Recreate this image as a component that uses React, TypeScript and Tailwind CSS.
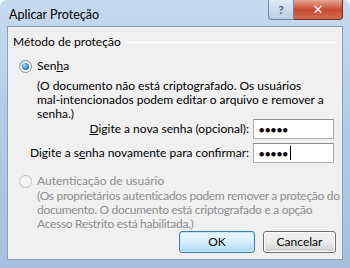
import React from 'react';

const font = { fontFamily: 'Lato, "Noto Sans", "DejaVu Sans", sans-serif' };

const Radio: React.FC<{ checked?: boolean; disabled?: boolean }> = ({ checked, disabled }) => (
  <span
    className={`relative flex h-[13px] w-[13px] items-center justify-center rounded-full border ${
      disabled ? 'border-[#c4c4c4] bg-[#f4f4f4]' : 'border-[#7c8ea6] bg-gradient-to-br from-[#e3e3e3] to-[#ffffff]'
    }`}
  >
    {checked && (
      <span className="h-[7px] w-[7px] rounded-full bg-[radial-gradient(circle_at_40%_35%,#a6dcf5,#1d74b8_70%,#0f4f87)]" />
    )}
  </span>
);

const PasswordInput: React.FC<{ caret?: boolean }> = ({ caret }) => (
  <div className="flex h-[20px] w-[81px] shrink-0 items-center border border-[#abadb3] border-t-[#8e8f8f] bg-white pl-[5px]">
    <span className="text-[9px] leading-none tracking-[0.5px] text-black">●●●●●</span>
    {caret && <span className="ml-[1px] h-[14px] w-[1px] bg-black" />}
  </div>
);

export default function App() {
  return (
    <div
      className="flex h-[268px] w-[350px] flex-col overflow-hidden rounded-t-[6px] bg-gradient-to-b from-[#c7dbef] via-[#b0cbe6] to-[#a5c0dd] text-[12px] text-black"
      style={font}
    >
      <div className="flex h-[30px] items-start">
        <div className="flex-1 pl-[9px] pt-[6px] text-[12.5px] leading-[18px] text-black">Aplicar Proteção</div>
        <div className="mr-[7px] flex">
          <div className="flex h-[20px] w-[26px] items-center justify-center rounded-bl-[4px] border border-t-0 border-[#6e86a1] bg-gradient-to-b from-[#dfe9f5] to-[#b9cde3] text-[12px] font-bold text-[#4d627b]">
            ?
          </div>
          <div className="flex h-[20px] w-[49px] items-center justify-center rounded-br-[4px] border border-l-0 border-t-0 border-[#7a2a1e] bg-gradient-to-b from-[#e8a493] via-[#c74a32] to-[#d26a4e] text-[13px] font-bold text-white">
            ✕
          </div>
        </div>
      </div>
      <div className="mx-[7px] mb-[8px] flex flex-1 flex-col border border-[#8ba1ba] bg-[#f0f0f0] px-[5px] leading-[14px]">
        <div className="mt-[8px] flex items-center gap-[5px]">
          <span>Método de proteção</span>
          <span className="h-[1px] flex-1 border-b border-b-white bg-[#d5dfe5] mr-[1px]" />
        </div>
        <div className="mt-[10px] flex items-center gap-[5px] pl-[6px]">
          <Radio checked />
          <span>
            Sen<span className="underline">h</span>a
          </span>
        </div>
        <p className="mt-[6px] pl-[24px] whitespace-nowrap">
          (O documento não está criptografado. Os usuários
          <br />
          mal-intencionados podem editar o arquivo e remover a
          <br />
          senha.)
        </p>
        <div className="-mt-[2px] flex items-center justify-end gap-[4px] pr-[3px] whitespace-nowrap">
          <span>
            <span className="underline">D</span>igite a nova senha (opcional):
          </span>
          <PasswordInput />
        </div>
        <div className="mt-[4px] flex items-center justify-end gap-[4px] pr-[3px] whitespace-nowrap">
          <span>
            Digite a s<span className="underline">e</span>nha novamente para confirmar:
          </span>
          <PasswordInput caret />
        </div>
        <div className="mt-[11px] flex items-center gap-[5px] pl-[6px] text-[#8d8d8d]">
          <Radio disabled />
          <span>Autenticação de usuário</span>
        </div>
        <p className="mt-[1px] pl-[24px] whitespace-nowrap tracking-[-0.3px] text-[#8d8d8d]">
          (Os proprietários autenticados podem remover a proteção do
          <br />
          documento. O documento está criptografado e a opção
          <br />
          Acesso Restrito está habilitada.)
        </p>
        <div className="mt-auto mb-[6px] flex justify-end gap-[8px] pr-[1px]">
          <button className="h-[22px] w-[76px] rounded-[3px] border border-[#3c7fb1] bg-gradient-to-b from-[#eaf6fd] via-[#d9f0fc] to-[#a7d9f5] shadow-[inset_0_0_0_1px_#c6e9fd] text-black">
            OK
          </button>
          <button className="h-[22px] w-[73px] rounded-[3px] border border-[#707070] bg-gradient-to-b from-[#f2f2f2] via-[#ebebeb] to-[#cfcfcf] shadow-[inset_0_0_0_1px_#fcfcfc] text-black">
            Cancelar
          </button>
        </div>
      </div>
    </div>
  );
}
